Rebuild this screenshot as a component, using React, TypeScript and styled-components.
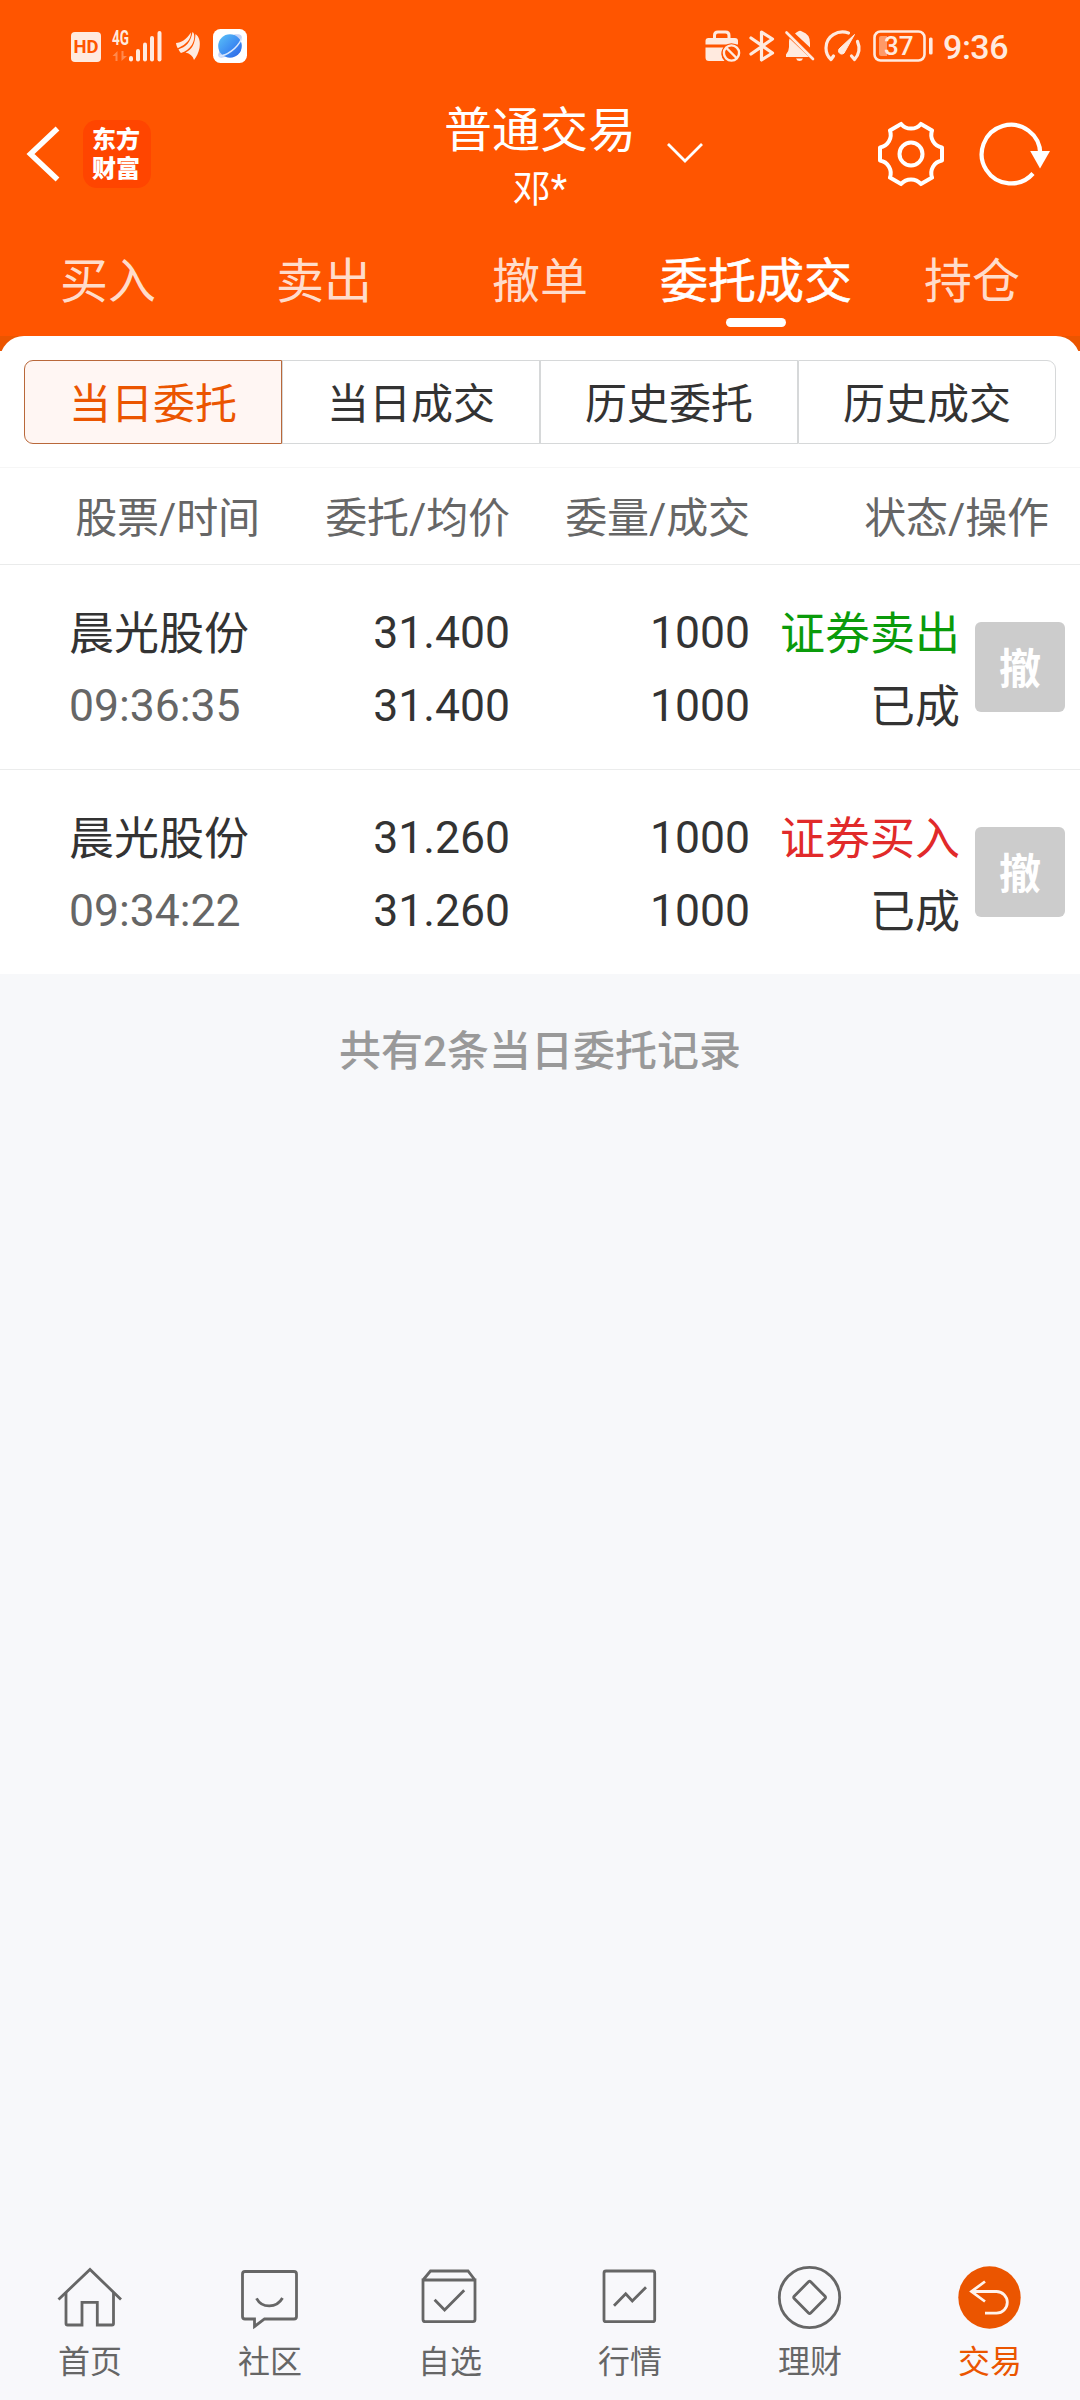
import React from "react";
import styled, { createGlobalStyle } from "styled-components";

const ORANGE = "#ff5500";
const ACCENT = "#eb5500";
const PALE = "#ffeadf";

const GlobalStyle = createGlobalStyle`
  * { box-sizing: border-box; }
  body {
    margin: 0;
    background: #f7f8fa;
    font-family: Roboto, "Noto Sans CJK SC", sans-serif;
    color: #333;
  }
  button {
    font: inherit;
    color: inherit;
    margin: 0;
    padding: 0;
    border: 0;
    background: none;
  }
  svg { display: block; flex: none; overflow: visible; }
`;

const Screen = styled.div`
  width: 1080px;
  height: 2400px;
  display: flex;
  flex-direction: column;
  overflow: hidden;
`;

const Header = styled.header`
  height: 336px;
  background: ${ORANGE};
  color: #fff;
`;

const StatusBar = styled.div`
  height: 92px;
  padding: 0 72px 0 71px;
  display: flex;
  align-items: center;
  justify-content: space-between;
`;

const StatusGroup = styled.div<{ $gap: number }>`
  display: flex;
  align-items: center;
  gap: ${(p) => p.$gap}px;
`;

const HdBadge = styled.span`
  width: 30px;
  height: 30px;
  margin: 2px -2px 0 0;
  border-radius: 4px;
  background: ${PALE};
  color: ${ORANGE};
  font-size: 18.500px;
  font-weight: 700;
  line-height: 30px;
  text-align: center;
`;

const Clock = styled.span`
  margin: 1px 0 0 1px;
  font-size: 34px;
  font-weight: 500;
  line-height: 40px;
  letter-spacing: -0.5px;
  color: ${PALE};
`;

const TitleBar = styled.div`
  height: 134px;
  padding: 0 29px 0 26px;
  display: grid;
  grid-template-columns: 1fr 270px 1fr;
  align-items: center;
`;

const TitleLeft = styled.div`
  display: flex;
  align-items: center;
  gap: 22px;
  margin-bottom: 10px;
`;

const BrandBadge = styled.div`
  width: 68px;
  height: 68px;
  border-radius: 14px;
  background: #ff4500;
  padding: 6px 0 0 9px;
  font-size: 24px;
  font-weight: 900;
  line-height: 28.500px;
  white-space: nowrap;
`;

const TitleCenter = styled.div`
  display: flex;
  flex-direction: column;
  align-items: center;
  margin: -2px 0 0 3px;
`;

const Title = styled.h1`
  margin: 0;
  font-size: 48px;
  font-weight: 400;
  line-height: 60px;
`;

const Account = styled.div`
  font-size: 38px;
  line-height: 54px;
  padding-top: 1px;
`;

const TitleRight = styled.div`
  display: flex;
  align-items: center;
  margin: 0 0 10px -8px;
`;

const IconSlot = styled.button<{ $left?: number; $push?: boolean }>`
  margin-left: ${(p) => (p.$push ? "auto" : `${p.$left ?? 0}px`)};
`;

const Tabs = styled.nav`
  height: 110px;
  display: grid;
  grid-template-columns: repeat(5, 1fr);
`;

const Tab = styled.button<{ $active?: boolean }>`
  display: flex;
  flex-direction: column;
  align-items: center;
  padding-top: 26px;
  font-size: 48px;
  line-height: 60px;
  white-space: nowrap;
  color: ${(p) => (p.$active ? "#fff" : "#ffdccb")};
  -webkit-text-stroke: ${(p) => (p.$active ? "0.600px #fff" : "0")};

  &::after {
    content: "";
    width: 60px;
    height: 9px;
    margin-top: 6px;
    border-radius: 5px;
    background: ${(p) => (p.$active ? "#fff" : "transparent")};
  }
`;

const SheetEdge = styled.div`
  height: 15px;
  overflow: hidden;
  background: ${ACCENT};

  &::before {
    content: "";
    display: block;
    height: 48px;
    border-radius: 24px 24px 0 0;
    background: #fff;
  }
`;

const Sheet = styled.section`
  background: #fff;
`;

const Segments = styled.div`
  display: grid;
  grid-template-columns: repeat(4, 1fr);
  padding: 9px 24px 23px;
  border-bottom: 1px solid #f6f6f6;
`;

const Segment = styled.button<{ $active?: boolean }>`
  height: 84px;
  padding-top: 5px;
  border: 1px solid ${(p) => (p.$active ? "#b9683a" : "#d6d8d9")};
  background: ${(p) => (p.$active ? "#fff6f3" : "#fff")};
  color: ${(p) => (p.$active ? ACCENT : "#333")};
  font-size: 42px;
  line-height: 77px;

  &:first-child { border-radius: 9px 0 0 9px; }
  &:last-child { border-radius: 0 9px 9px 0; }
`;

const ColumnHeads = styled.div`
  height: 97px;
  padding-top: 2px;
  display: grid;
  grid-template-columns: 260px 250px 240px 299px;
  border-bottom: 1px solid #eaebeb;
  color: #666;
  font-size: 42px;
  line-height: 98px;
  text-align: right;
`;

const ColumnHead = styled.span`
  letter-spacing: -0.1px;
`;

const OrderRow = styled.div`
  height: 205px;
  padding: 31px 15px 0 69px;
  display: grid;
  grid-template-columns: 191px 250px 240px 210px 90px;
  border-bottom: 1px solid #ebecec;
  font-size: 45px;
  line-height: 73px;

  &:last-child {
    height: 204px;
    border-bottom: 0;
  }
`;

const Cell = styled.div<{ $left?: boolean }>`
  display: flex;
  flex-direction: column;
  white-space: nowrap;
  text-align: ${(p) => (p.$left ? "left" : "right")};
`;

const Digits = styled.span<{ $muted?: boolean }>`
  height: 73px;
  padding-top: 1px;
  font-size: 44.500px;
  color: ${(p) => (p.$muted ? "#666" : "#333")};
`;

const Label = styled.span<{ $color?: string }>`
  height: 73px;
  padding-top: 2px;
  color: ${(p) => p.$color ?? "#333"};
`;

const CancelButton = styled.button`
  width: 90px;
  height: 90px;
  margin: 26px 0 0 15px;
  padding-top: 5px;
  border-radius: 6px;
  background: #ccc;
  color: #fff;
  font-size: 42px;
  font-weight: 700;
  line-height: 85px;
`;

const Summary = styled.p`
  margin: 48px 0 0;
  flex: 1;
  text-align: center;
  color: #999;
  font-size: 42px;
  font-weight: 500;
  line-height: 60px;
`;

const BottomNav = styled.nav`
  height: 150px;
  padding-top: 10px;
  display: grid;
  grid-template-columns: repeat(6, 1fr);
  background: #f8f8fb;
`;

const NavItem = styled.button<{ $active?: boolean }>`
  display: flex;
  flex-direction: column;
  align-items: center;
  justify-content: flex-start;
  gap: 10px;
  color: ${(p) => (p.$active ? ACCENT : "#666")};
  font-size: 32px;
  line-height: 40px;
`;

const SignalIcon = () => (
  <svg width="51" height="32" viewBox="0 0 51 32" fill={PALE}>
    <text x="0" y="15" fontFamily="Roboto" fontSize="19.5" fontWeight="700" textLength="17" lengthAdjust="spacingAndGlyphs">4G</text>
    <path d="M5.5 31V21L0.5 26H3.5V31ZM9.5 21V31L15 26H11.5V21Z" opacity="0.35" />
    <rect x="17" y="26" width="4" height="5.5" rx="2" />
    <rect x="24" y="19" width="4" height="12.5" rx="2" />
    <rect x="31" y="12.5" width="4" height="19" rx="2" />
    <rect x="38" y="6" width="4" height="25.5" rx="2" />
    <rect x="45.5" y="1" width="4" height="30.5" rx="2" />
  </svg>
);

const WingIcon = () => (
  <svg width="24" height="28" viewBox="0 0 24 28" fill={PALE}>
    <path d="M0 11C5 10.500 10 8 15 .500C15 7 11 12 1.800 16.200C1 15 .300 13 0 11Z" />
    <path d="M2.500 17.200C9.500 15 14.500 11 16.500 0C19 1 19 8 15.800 13C13 17 9.500 19.500 5 21C4 20 3 18.500 2.500 17.200Z" />
    <path d="M9.500 20.500C16 17.500 19 12 19.500 2C23.500 5 24.500 10 23.500 16C22.500 21 20.500 25 18 28C17 24 14 21.500 9.500 20.500Z" />
  </svg>
);

const BrowserIcon = () => (
  <svg width="34" height="34" viewBox="0 0 34 34">
    <defs>
      <linearGradient id="globe" x1="0" y1="0" x2="1" y2="1">
        <stop offset="0" stopColor="#5bc3f8" />
        <stop offset="0.55" stopColor="#3d8df2" />
        <stop offset="1" stopColor="#2c62e4" />
      </linearGradient>
    </defs>
    <rect width="34" height="34" rx="7.500" fill="#fff" />
    <path d="M21 5.500C27 4.500 30 6 28.500 10.500L25 12ZM6.500 22C4 27 5 30 12 28L10 23Z" fill="#c5d2f6" />
    <circle cx="17" cy="17" r="11.800" fill="url(#globe)" />
    <path d="M6.500 27C13 27 24 20 28.800 9.500" fill="none" stroke="#d9e8fd" strokeWidth="1.600" />
  </svg>
);

const BriefcaseIcon = () => (
  <svg width="36" height="32" viewBox="0 0 36 32">
    <path d="M9.500 9V5.500Q9.500 2 13 2H20.500Q24 2 24 5.500V9" fill="none" stroke={PALE} strokeWidth="3" />
    <path d="M3.500 8H30Q33 8 33 11V14.500H0.500V11Q.500 8 3.500 8Z" fill={PALE} />
    <path d="M.500 17.500H18.500A10 10 0 0 0 19.500 31H4Q.500 31 .500 27.500Z" fill={PALE} />
    <circle cx="26.500" cy="23" r="9.800" fill={ORANGE} />
    <g fill="none" stroke={PALE} strokeWidth="2.400">
      <circle cx="26.500" cy="23" r="7.600" />
      <path d="M21.500 18L31.500 28" />
    </g>
  </svg>
);

const BluetoothIcon = () => (
  <svg width="26" height="32" viewBox="0 0 26 32" fill="none" stroke={PALE} strokeWidth="3.200" strokeLinejoin="round" strokeLinecap="round">
    <path d="M1 8L22.500 23L11.500 30V2L22.500 9L1 24" />
  </svg>
);

const MutedBellIcon = () => (
  <svg width="30" height="32" viewBox="0 0 30 32" fill={PALE}>
    <path d="M10 3.500Q12 2 13 1.500Q15 0 17 1.500Q25 4 25 13V17.500Z" />
    <path d="M4.500 8.500L24 27H1V24.500Q4 21 4 17V11Z" />
    <path d="M11 28.500H18Q17 31 14.500 31T11 28.500Z" />
    <path d="M1.500 2.500L28 29" stroke={PALE} strokeWidth="2.600" strokeLinecap="round" />
  </svg>
);

const GaugeIcon = () => (
  <svg width="37" height="32" viewBox="0 0 37 32">
    <g fill="none" stroke={PALE} strokeWidth="3.200" strokeLinecap="round" strokeLinejoin="round">
      <path d="M24.500 3C14 -.500 2 6 2 18Q2 25 7 29.500L9.500 26" />
      <path d="M33.500 11.500C36.500 18.500 34.500 25 30.500 29.500L27.500 26" />
    </g>
    <path d="M30.500 4.500L21 21.500A3.300 3.300 0 1 1 16 18Z" fill={PALE} stroke={PALE} strokeLinejoin="round" />
  </svg>
);

const BatterySvg = styled.svg`
  margin-left: 3px;
`;

const BatteryIcon = () => (
  <BatterySvg width="60" height="32" viewBox="0 0 60 32">
    <rect x="1.500" y="1.500" width="50" height="29" rx="6" fill="none" stroke={PALE} strokeWidth="2.600" />
    <path d="M8 6H14V26H8Q6 26 6 24V8Q6 6 8 6Z" fill="#ff9a68" />
    <rect x="56" y="7.500" width="3.600" height="17" rx="1.500" fill={PALE} />
    <text x="11" y="25" fill={PALE} fontFamily="Roboto" fontSize="26" fontWeight="500">37</text>
  </BatterySvg>
);

const BackIcon = () => (
  <svg width="35" height="58" viewBox="0 0 35 58" fill="none" stroke="#fff" strokeWidth="5.500">
    <path d="M31.500 3.500L4.500 29L31.500 54.500" />
  </svg>
);

const ChevronDownIcon = () => (
  <svg width="38" height="22" viewBox="0 0 38 22" fill="none" stroke="#fff" strokeWidth="2.800">
    <path d="M2 1L19 18L36 1" />
  </svg>
);

const GearIcon = () => (
  <svg width="68" height="68" viewBox="-34 -34 68 68" fill="none" stroke="#fff" strokeWidth="4" strokeLinejoin="round">
    <circle r="11.500" />
    <path d="M-9.900 -30.100A12.800 12.800 0 0 0 9.900 -30.100L21.100 -23.600A12.800 12.800 0 0 0 31 -6.500V6.500A12.800 12.800 0 0 0 21.100 23.600L9.900 30.100A12.800 12.800 0 0 0 -9.900 30.100L-21.100 23.600A12.800 12.800 0 0 0 -31 6.500V-6.500A12.800 12.800 0 0 0 -21.100 -23.600Z" />
  </svg>
);

const RefreshIcon = () => (
  <svg width="72" height="68" viewBox="-32 -34 72 68">
    <path d="M22 19.500A29.300 29.300 0 1 1 29.300 0" fill="none" stroke="#fff" strokeWidth="4.200" />
    <path d="M19.200 -3H39L29 14.500Z" fill="#fff" />
  </svg>
);

const navPaths: Record<string, React.ReactNode> = {
  home: (
    <>
      <path d="M4.500 39.500L36 9.500L67 39.500" />
      <path d="M12 32.500V63.500Q12 65 13.500 65H28V42.300H43.300V65H58Q59.500 65 59.500 63.500V32.500" />
    </>
  ),
  community: (
    <>
      <path d="M11 11.500H60Q62.500 11.500 62.500 14V56.500Q62.500 59 60 59H30.500L20.500 66.500V59H11Q8.500 59 8.500 56.500V14Q8.500 11.500 11 11.500Z" />
      <path d="M22.500 38.300C28 48.500 42.500 48.500 48.500 38" />
    </>
  ),
  watchlist: (
    <>
      <path d="M9 20H61V59.500Q61 61.700 58.800 61.700H11.200Q9 61.700 9 59.500ZM9 20L16.500 11H54L61 20" />
      <path d="M20.600 39.700L30.600 50L50.200 30.300" />
    </>
  ),
  market: (
    <>
      <rect x="10" y="11" width="50.700" height="50.700" rx="2" />
      <path d="M20 45.700L31.700 33.700L38.300 41L52 27.300" />
    </>
  ),
  wealth: (
    <>
      <circle cx="35.500" cy="37.500" r="30.200" />
      <path d="M34.500 21.800Q35.600 20.800 36.700 21.800L51 36.200Q52 37.400 51 38.500L36.700 53Q35.600 54 34.500 53L20.200 38.500Q19.200 37.400 20.200 36.200Z" />
    </>
  ),
  trade: (
    <>
      <circle cx="35.500" cy="37.500" r="31.200" fill={ACCENT} stroke="none" />
      <path d="M31 21.500L17.500 31.500L31 41.500M17.500 31.500H42.500A10.800 10.800 0 0 1 42.500 53.100H31" stroke="#fff3ec" />
    </>
  ),
};

const NavIcon = ({ name }: { name: string }) => (
  <svg width="72" height="72" viewBox="0 0 72 72" fill="none" stroke="currentColor" strokeWidth="2.800">
    {navPaths[name]}
  </svg>
);

const tabs = ["买入", "卖出", "撤单", "委托成交", "持仓"];
const segments = ["当日委托", "当日成交", "历史委托", "历史成交"];
const columns = ["股票/时间", "委托/均价", "委量/成交", "状态/操作"];

const orders = [
  { name: "晨光股份", time: "09:36:35", price: "31.400", avg: "31.400", qty: "1000", done: "1000", side: "证券卖出", color: "#0a9b0a", state: "已成" },
  { name: "晨光股份", time: "09:34:22", price: "31.260", avg: "31.260", qty: "1000", done: "1000", side: "证券买入", color: "#e12a2a", state: "已成" },
];

const navItems = [
  { icon: "home", label: "首页" },
  { icon: "community", label: "社区" },
  { icon: "watchlist", label: "自选" },
  { icon: "market", label: "行情" },
  { icon: "wealth", label: "理财" },
  { icon: "trade", label: "交易" },
];

export default function App() {
  return (
    <>
      <GlobalStyle />
      <Screen>
        <Header>
          <StatusBar>
            <StatusGroup $gap={13}>
              <HdBadge>HD</HdBadge>
              <SignalIcon />
              <WingIcon />
              <BrowserIcon />
            </StatusGroup>
            <StatusGroup $gap={9}>
              <BriefcaseIcon />
              <BluetoothIcon />
              <MutedBellIcon />
              <GaugeIcon />
              <BatteryIcon />
              <Clock>9:36</Clock>
            </StatusGroup>
          </StatusBar>
          <TitleBar>
            <TitleLeft>
              <BackIcon />
              <BrandBadge>东方<br />财富</BrandBadge>
            </TitleLeft>
            <TitleCenter>
              <Title>普通交易</Title>
              <Account>邓*</Account>
            </TitleCenter>
            <TitleRight>
              <ChevronDownIcon />
              <IconSlot $push><GearIcon /></IconSlot>
              <IconSlot $left={34}><RefreshIcon /></IconSlot>
            </TitleRight>
          </TitleBar>
          <Tabs>
            {tabs.map((t) => (
              <Tab key={t} $active={t === "委托成交"}>{t}</Tab>
            ))}
          </Tabs>
        </Header>
        <SheetEdge />
        <Sheet>
          <Segments>
            {segments.map((s, i) => (
              <Segment key={s} $active={i === 0}>{s}</Segment>
            ))}
          </Segments>
          <ColumnHeads>
            {columns.map((c) => (
              <ColumnHead key={c}>{c}</ColumnHead>
            ))}
          </ColumnHeads>
          {orders.map((o) => (
            <OrderRow key={o.time}>
              <Cell $left>
                <Label>{o.name}</Label>
                <Digits $muted>{o.time}</Digits>
              </Cell>
              <Cell>
                <Digits>{o.price}</Digits>
                <Digits>{o.avg}</Digits>
              </Cell>
              <Cell>
                <Digits>{o.qty}</Digits>
                <Digits>{o.done}</Digits>
              </Cell>
              <Cell>
                <Label $color={o.color}>{o.side}</Label>
                <Label>{o.state}</Label>
              </Cell>
              <CancelButton>撤</CancelButton>
            </OrderRow>
          ))}
        </Sheet>
        <Summary>共有2条当日委托记录</Summary>
        <BottomNav>
          {navItems.map((n) => (
            <NavItem key={n.icon} $active={n.icon === "trade"}>
              <NavIcon name={n.icon} />
              {n.label}
            </NavItem>
          ))}
        </BottomNav>
      </Screen>
    </>
  );
}
